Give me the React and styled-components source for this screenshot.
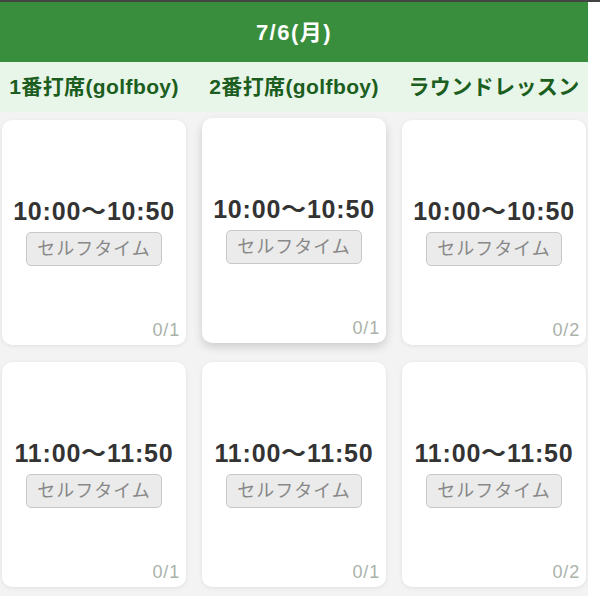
import React from "react";
import styled, { createGlobalStyle } from "styled-components";

const Global = createGlobalStyle`
  html, body { margin: 0; padding: 0; background: #ffffff; }
  body { font-family: "Liberation Sans", "Noto Sans CJK JP", sans-serif; }
  * { box-sizing: border-box; }
`;

const TopStrip = styled.div`
  height: 2px;
  background: #444444;
`;

const Board = styled.div`
  width: 588px;
`;

const DateHeader = styled.div`
  height: 60px;
  padding-bottom: 5px;
  background: #388e3c;
  color: #ffffff;
  font-weight: 700;
  font-size: 22px;
  letter-spacing: 1.5px;
  display: flex;
  align-items: center;
  justify-content: center;
`;

const Columns = styled.div`
  display: grid;
  grid-template-columns: repeat(3, 188px);
  column-gap: 12px;
`;

const HeadRow = styled(Columns)`
  height: 50px;
  padding-bottom: 5px;
  background: #e8f5e9;
  align-items: center;
`;

const ColHead = styled.div`
  text-align: center;
  color: #1b5e20;
  font-weight: 700;
  font-size: 21px;
  letter-spacing: 0.4px;
  white-space: nowrap;
`;

const SlotGrid = styled(Columns)`
  background: #f3f3f3;
  padding-top: 8px;
  row-gap: 17px;
  align-content: start;
  height: 484px;
`;

const Card = styled.div`
  position: relative;
  margin: 0 2px;
  height: 225px;
  background: #ffffff;
  border-radius: 10px;
  box-shadow: ${(p) =>
    p.$raised ? "0 4px 10px rgba(0,0,0,0.16)" : "0 1px 4px rgba(0,0,0,0.08)"};
  transform: ${(p) => (p.$raised ? "translateY(-2px)" : "none")};
  display: flex;
  flex-direction: column;
  align-items: center;
  justify-content: center;
  gap: 6px;
  padding-bottom: 4px;
`;

const Time = styled.div`
  font-weight: 700;
  font-size: 25px;
  letter-spacing: 0.8px;
  color: #333333;
  line-height: 30px;
  white-space: nowrap;
`;

const Tag = styled.div`
  background: #ebebeb;
  border: 1px solid #c8c8c8;
  border-radius: 5px;
  color: #888888;
  font-size: 18px;
  letter-spacing: 1px;
  line-height: 32px;
  height: 34px;
  padding: 0 10px;
  white-space: nowrap;
`;

const Count = styled.div`
  position: absolute;
  right: 6px;
  bottom: 4px;
  color: #aab2aa;
  font-size: 18px;
  letter-spacing: 0.8px;
`;

const heads = ["1番打席(golfboy)", "2番打席(golfboy)", "ラウンドレッスン"];
const slots = [
  { time: "10:00〜10:50", counts: ["0/1", "0/1", "0/2"] },
  { time: "11:00〜11:50", counts: ["0/1", "0/1", "0/2"] },
];

export default function App() {
  return (
    <>
      <Global />
      <TopStrip />
      <Board>
        <DateHeader>7/6(月)</DateHeader>
        <HeadRow>
          {heads.map((h) => (
            <ColHead key={h}>{h}</ColHead>
          ))}
        </HeadRow>
        <SlotGrid>
          {slots.map((s, r) =>
            s.counts.map((c, i) => (
              <Card key={`${r}-${i}`} $raised={r === 0 && i === 1}>
                <Time>{s.time}</Time>
                <Tag>セルフタイム</Tag>
                <Count>{c}</Count>
              </Card>
            ))
          )}
        </SlotGrid>
      </Board>
    </>
  );
}
